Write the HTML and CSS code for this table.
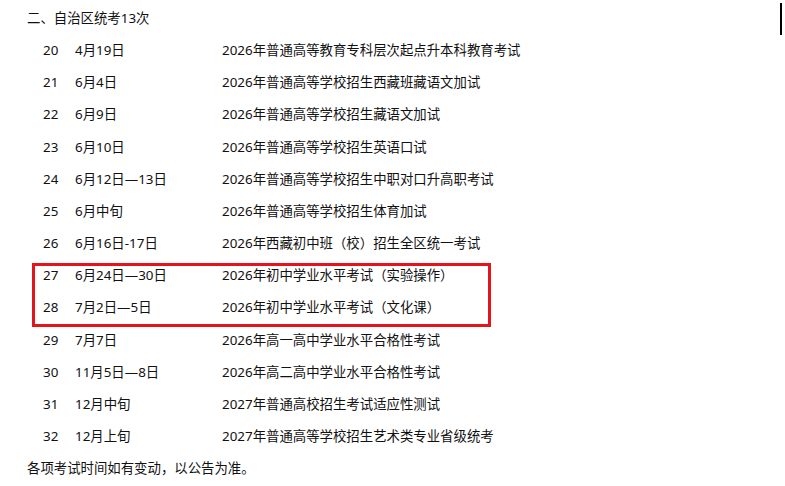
FILE: index.html
```html
<!DOCTYPE html>
<html lang="zh-CN">
<head>
    <meta charset="UTF-8">
    <meta name="viewport" content="width=device-width, initial-scale=1.0">
    <title>自治区统考13次</title>
    <link rel="stylesheet" href="styles.css">
</head>
<body>

<div class="caret"></div>

<div class="heading">二、自治区统考13次</div>

<div class="schedule">
    <div class="row"><span class="num">20</span><span class="date">4月19日</span><span class="title">2026年普通高等教育专科层次起点升本科教育考试</span></div>
    <div class="row"><span class="num">21</span><span class="date">6月4日</span><span class="title">2026年普通高等学校招生西藏班藏语文加试</span></div>
    <div class="row"><span class="num">22</span><span class="date">6月9日</span><span class="title">2026年普通高等学校招生藏语文加试</span></div>
    <div class="row"><span class="num">23</span><span class="date">6月10日</span><span class="title">2026年普通高等学校招生英语口试</span></div>
    <div class="row"><span class="num">24</span><span class="date">6月12日—13日</span><span class="title">2026年普通高等学校招生中职对口升高职考试</span></div>
    <div class="row"><span class="num">25</span><span class="date">6月中旬</span><span class="title">2026年普通高等学校招生体育加试</span></div>
    <div class="row"><span class="num">26</span><span class="date">6月16日-17日</span><span class="title">2026年西藏初中班（校）招生全区统一考试</span></div>

    <!-- highlighted rows -->
    <div class="marked">
        <div class="row"><span class="num">27</span><span class="date">6月24日—30日</span><span class="title">2026年初中学业水平考试（实验操作）</span></div>
        <div class="row"><span class="num">28</span><span class="date">7月2日—5日</span><span class="title">2026年初中学业水平考试（文化课）</span></div>
    </div>

    <div class="row"><span class="num">29</span><span class="date">7月7日</span><span class="title">2026年高一高中学业水平合格性考试</span></div>
    <div class="row"><span class="num">30</span><span class="date">11月5日—8日</span><span class="title">2026年高二高中学业水平合格性考试</span></div>
    <div class="row"><span class="num">31</span><span class="date">12月中旬</span><span class="title">2027年普通高校招生考试适应性测试</span></div>
    <div class="row"><span class="num">32</span><span class="date">12月上旬</span><span class="title">2027年普通高等学校招生艺术类专业省级统考</span></div>
</div>

<div class="note">各项考试时间如有变动，以公告为准。</div>

</body>
</html>
```

FILE: styles.css
```css
body {
    margin: 0;
    padding: 2px 0 0 27px;
    font-family: "Noto Sans", "Noto Sans CJK SC", sans-serif;
    font-size: 13.4px;
    line-height: 32.17px;
    color: #111;
    background: #fff;
}
.heading, .note, .row {
    height: 32.17px;
    white-space: nowrap;
}
.schedule {
    padding-left: 16px;
}
.row {
    display: flex;
}
.num {
    width: 32px;
}
.date {
    width: 147px;
}
/* red frame drawn over rows 27 and 28 */
.marked {
    position: relative;
}
.marked::after {
    content: "";
    position: absolute;
    left: -11px;
    top: 4px;
    width: 453px;
    height: 58px;
    border: 3px solid #e5131b;
}
.caret {
    position: absolute;
    left: 780px;
    top: 3px;
    width: 2px;
    height: 32px;
    background: #000;
}
```
